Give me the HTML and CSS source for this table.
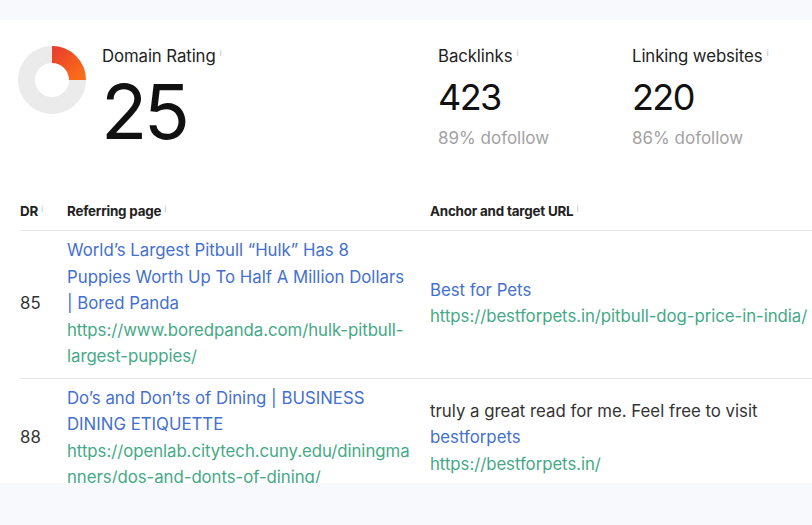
FILE: index.html
```html
<!DOCTYPE html>
<html lang="en">
<head>
<meta charset="utf-8">
<title>Backlink profile</title>
<link rel="stylesheet" href="styles.css">
</head>
<body>
<div class="top-strip"></div>
<main class="panel">
  <section class="stats">
    <div class="donut">
      <svg width="68" height="68" viewBox="0 0 68 68">
        <defs>
          <linearGradient id="dr" x1="0" y1="0" x2="1" y2="1">
            <stop offset="0" stop-color="#e9412c"/>
            <stop offset="1" stop-color="#fb6d18"/>
          </linearGradient>
        </defs>
        <circle cx="34" cy="34" r="25.5" fill="none" stroke="#ebebeb" stroke-width="17"/>
        <path d="M34 8.5 A25.5 25.5 0 0 1 59.5 34" fill="none" stroke="url(#dr)" stroke-width="17"/>
      </svg>
    </div>
    <div class="stat stat-dr">
      <div class="stat-label">Domain Rating<span class="info">i</span></div>
      <div class="stat-big">25</div>
    </div>
    <div class="stat stat-bl">
      <div class="stat-label">Backlinks<span class="info">i</span></div>
      <div class="stat-num">423</div>
      <div class="stat-sub">89% dofollow</div>
    </div>
    <div class="stat stat-lw">
      <div class="stat-label">Linking websites<span class="info">i</span></div>
      <div class="stat-num">220</div>
      <div class="stat-sub">86% dofollow</div>
    </div>
  </section>

  <table class="links">
    <colgroup>
      <col class="c-dr">
      <col class="c-ref">
      <col class="c-anchor">
    </colgroup>
    <thead>
      <tr>
        <th>DR<span class="info">i</span></th>
        <th>Referring page<span class="info">i</span></th>
        <th>Anchor and target URL<span class="info">i</span></th>
      </tr>
    </thead>
    <tbody>
      <tr>
        <td class="dr">85</td>
        <td class="ref">
          <a class="title" href="#">World’s Largest Pitbull “Hulk” Has 8 Puppies Worth Up To Half A Million Dollars | Bored Panda</a>
          <a class="url" href="#">https://www.boredpanda.com/hulk-pitbull-largest-puppies/</a>
        </td>
        <td class="anchor">
          <a class="title" href="#">Best for Pets</a>
          <a class="url" href="#">https://bestforpets.in/pitbull-dog-price-in-india/</a>
        </td>
      </tr>
      <tr>
        <td class="dr">88</td>
        <td class="ref">
          <a class="title" href="#">Do’s and Don’ts of Dining | BUSINESS DINING ETIQUETTE</a>
          <a class="url" href="#">https://openlab.citytech.cuny.edu/diningmanners/dos-and-donts-of-dining/</a>
        </td>
        <td class="anchor">
          <span class="text">truly a great read for me. Feel free to visit</span>
          <a class="title" href="#">bestforpets</a>
          <a class="url" href="#">https://bestforpets.in/</a>
        </td>
      </tr>
    </tbody>
  </table>
</main>
<div class="bottom-strip"></div>
</body>
</html>
```

FILE: styles.css
```css
* { box-sizing: border-box; }

html, body {
  margin: 0;
  padding: 0;
  background: #f8f9fc;
  font-family: Inter, "Noto Sans", sans-serif;
  color: #222;
  overflow: hidden;
}

.top-strip { height: 20px; background: #f8f9fc; }

.panel {
  background: #fff;
  height: 463px;
  overflow: hidden;
  padding-top: 23px;
}

.bottom-strip { height: 42px; background: #f8f9fc; }

.stats {
  display: flex;
  align-items: flex-start;
  padding-left: 18px;
}

.donut { width: 68px; height: 68px; margin-right: 16px; margin-top: 3px; }
.donut svg { display: block; }

.stat { display: flex; flex-direction: column; }
.stat-dr { width: 336px; }
.stat-bl { width: 194px; }

.stat-label {
  font-size: 16.8px;
  line-height: 20px;
  color: #222;
  letter-spacing: -0.1px;
}

.info {
  font-size: 9px;
  color: #c4c4c4;
  vertical-align: 6px;
  margin-left: 4px;
  font-weight: 400;
}

.stat-big {
  font-size: 76px;
  line-height: 76px;
  letter-spacing: -3.5px;
  margin-top: 7px;
  margin-left: -1px;
  color: #111;
}

.stat-num {
  font-size: 36px;
  line-height: 38px;
  margin-top: 12px;
  color: #111;
  letter-spacing: -1.6px;
}

.stat-sub {
  font-size: 17px;
  line-height: 20px;
  margin-top: 12px;
  color: #a2a2a2;
}

.links {
  margin-left: 20px;
  margin-top: 52px;
  border-collapse: collapse;
  table-layout: fixed;
  width: 920px;
}

.c-dr { width: 47px; }
.c-ref { width: 363px; }
.c-anchor { width: 510px; }

.links th {
  text-align: left;
  font-size: 13.4px;
  line-height: 16px;
  font-weight: 700;
  color: #222;
  padding: 0 0 11px;
  border-bottom: 1px solid #e8e8e8;
  letter-spacing: -0.2px;
}

.links th .info { vertical-align: 4px; margin-left: 3px; }

.links td {
  vertical-align: middle;
  font-size: 16.8px;
  line-height: 26.5px;
  padding: 6px 0 8px;
  border-bottom: 1px solid #e8e8e8;
}

.links td.dr { color: #333; }

.links td.ref { padding-right: 20px; }

.links a { display: block; text-decoration: none; }

.title { color: #4470d0; }
.url { color: #45a986; overflow-wrap: anywhere; letter-spacing: -0.05px; }
.anchor .url, .anchor .title, .anchor .text { white-space: nowrap; }
.text { display: block; color: #333; }
```
